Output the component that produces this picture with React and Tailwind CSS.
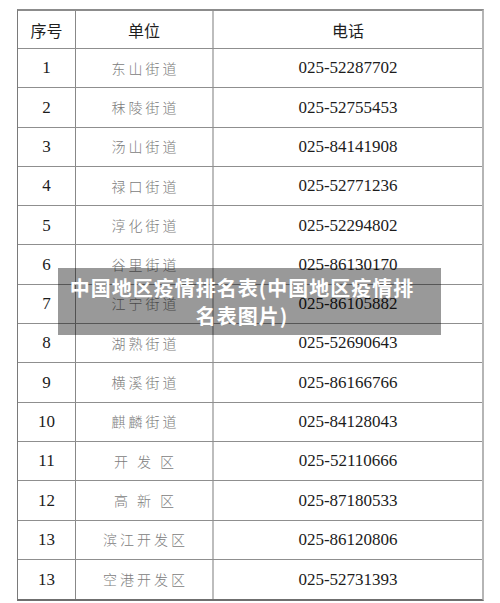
import React from "react";

const rows = [
  ["1", "东山街道", "025-52287702"],
  ["2", "秣陵街道", "025-52755453"],
  ["3", "汤山街道", "025-84141908"],
  ["4", "禄口街道", "025-52771236"],
  ["5", "淳化街道", "025-52294802"],
  ["6", "谷里街道", "025-86130170"],
  ["7", "江宁街道", "025-86105882"],
  ["8", "湖熟街道", "025-52690643"],
  ["9", "横溪街道", "025-86166766"],
  ["10", "麒麟街道", "025-84128043"],
  ["11", "开 发 区", "025-52110666"],
  ["12", "高 新 区", "025-87180533"],
  ["13", "滨江开发区", "025-86120806"],
  ["13", "空港开发区", "025-52731393"],
];

export default function App() {
  return (
    <div className="relative w-[500px] h-[603px] bg-white overflow-hidden">
      <div className="ml-[17px] mt-[9px] w-[467px] border-t-2 border-l border-b-2 border-r-2 border-t-[#8c8c8c] border-l-[#7a7a7a] border-b-[#6f6f6f] border-r-[#b5b5b5]">
        <div
          className="grid grid-cols-[58px_138px_1fr] h-[38px] border-b border-[#8f8f8f] text-[#1e1e1e] text-[16px]"
          style={{ fontFamily: '"Noto Sans CJK SC", sans-serif' }}
        >
          <div className="flex items-center justify-center border-r border-[#888]">序号</div>
          <div className="flex items-center justify-center border-r-2 border-[#bdbdbd]">单位</div>
          <div className="flex items-center justify-center">电话</div>
        </div>
        {rows.map((r, i) => (
          <div
            key={i}
            className={`grid grid-cols-[58px_138px_1fr] h-[39.3px] ${i < rows.length - 1 ? "border-b border-[#8f8f8f]" : ""}`}
          >
            <div
              className="flex items-center justify-center border-r border-[#888] text-[17px] text-[#1c1c1c]"
              style={{ fontFamily: '"Liberation Serif", serif' }}
            >
              {r[0]}
            </div>
            <div
              className="flex items-center justify-center border-r-2 border-[#bdbdbd] text-[14px] text-[#7c7c7c] tracking-[3px] pl-[3px] whitespace-pre"
              style={{ fontFamily: '"Noto Sans CJK SC", sans-serif', fontWeight: 300 }}
            >
              {r[1]}
            </div>
            <div
              className="flex items-center justify-center text-[17px] text-[#1c1c1c]"
              style={{ fontFamily: '"Liberation Serif", serif' }}
            >
              {r[2]}
            </div>
          </div>
        ))}
      </div>
      <div className="absolute left-[58px] top-[268px] w-[383px] h-[67px] bg-black/40 pl-[10px] pr-[25px] flex items-center">
        <div
          className="w-full text-center text-white font-bold text-[20px] leading-[28px] tracking-[1px]"
          style={{ fontFamily: '"Noto Sans CJK SC", sans-serif' }}
        >
          中国地区疫情排名表(中国地区疫情排名表图片)
        </div>
      </div>
    </div>
  );
}
